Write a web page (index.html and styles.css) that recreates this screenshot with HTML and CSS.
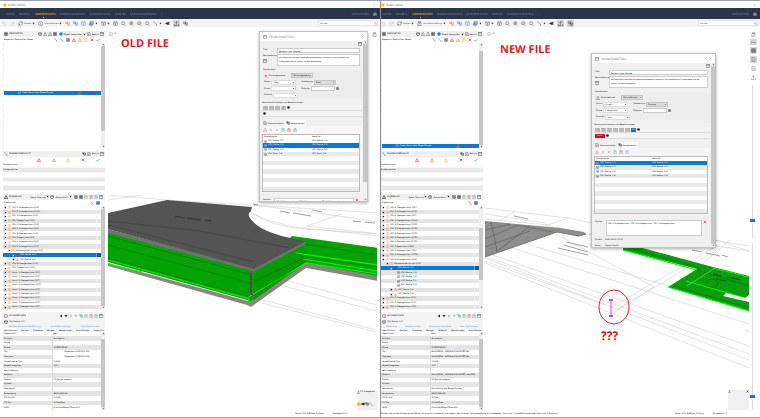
FILE: index.html
```html
<!DOCTYPE html>
<html lang="de">
<head>
<meta charset="utf-8">
<title>Solibri Office</title>
<link rel="stylesheet" href="styles.css">
</head>
<body>
<svg class="sprite" aria-hidden="true">
  <symbol id="undo" viewBox="0 0 16 16"><path d="M5 2 2 6l4 3M2 6h7a4 4 0 0 1 0 8H5"/></symbol>
  <symbol id="redo" viewBox="0 0 16 16"><path d="m11 2 3 4-4 3M14 6H7a4 4 0 0 0 0 8h4"/></symbol>
  <symbol id="spin" viewBox="0 0 16 16"><path d="M2 9a6 6 0 0 1 11-4M14 7a6 6 0 0 1-11 4M10 5h4V1M6 11H2v4"/></symbol>
  <symbol id="info" viewBox="0 0 16 16"><circle cx="8" cy="8" r="7"/><path d="M8 7v5M8 4v1"/></symbol>
  <symbol id="boxes" viewBox="0 0 16 16"><path d="M1 2h7v6H1zM6 6l5-2 4 2v6l-4 3-5-3zM6 6l5 3 4-3M11 9v6"/></symbol>
  <symbol id="cube" viewBox="0 0 16 16"><path d="m8 1 6 3v8l-6 3-6-3V4zM2 4l6 3 6-3M8 7v8"/></symbol>
  <symbol id="layers" viewBox="0 0 16 16"><path d="M2 6h8v8H2zM5 6V2h9v8h-4M2 10h8M6 6v8"/></symbol>
  <symbol id="zoom" viewBox="0 0 16 16"><circle cx="7" cy="7" r="5"/><path d="m11 11 4 4"/></symbol>
  <symbol id="zin" viewBox="0 0 16 16"><circle cx="7" cy="7" r="5"/><path d="m11 11 4 4M4 7h6M7 4v6"/></symbol>
  <symbol id="zout" viewBox="0 0 16 16"><circle cx="7" cy="7" r="5"/><path d="m11 11 4 4M4 7h6"/></symbol>
  <symbol id="rule" viewBox="0 0 16 16"><path d="m2 3 11 10M1 5l3-3M11 15l3-3"/></symbol>
  <symbol id="plane" viewBox="0 0 16 16"><path d="m1 8 6-3 8-1-3 4 2 3H7z" fill="currentColor"/></symbol>
  <symbol id="up" viewBox="0 0 16 16"><path d="M8 12V2M4 6l4-4 4 4M1 10v5h14v-5"/></symbol>
  <symbol id="check" viewBox="0 0 16 16"><path d="m2 8 4 5 8-10" stroke-width="2.500"/></symbol>
  <symbol id="cross" viewBox="0 0 16 16"><path d="m3 3 10 10M13 3 3 13" stroke-width="2.500"/></symbol>
  <symbol id="tri" viewBox="0 0 16 16"><path d="M8 2 15 14H1zM8 6v4" stroke-width="2"/></symbol>
  <symbol id="grid" viewBox="0 0 16 16"><path d="M2 2h12v12H2zM2 6h12M2 10h12M6 2v12M10 2v12"/></symbol>
  <symbol id="win" viewBox="0 0 16 16"><path d="M1 2h14v12H1zM1 5h14"/></symbol>
  <symbol id="doc" viewBox="0 0 16 16"><path d="M3 5h10v10H3zM5 5V1h6v4M6 9h4"/></symbol>
  <symbol id="user" viewBox="0 0 16 16"><path d="M1 5h14v9H1zM5 5V2h6v3" fill="currentColor"/></symbol>
  <symbol id="page" viewBox="0 0 16 16"><path d="M3 1h7l3 4v10H3zM5 12l5-6"/></symbol>
  <symbol id="dot" viewBox="0 0 16 16"><circle cx="8" cy="8" r="7" fill="currentColor" stroke="none"/></symbol>
  <symbol id="down" viewBox="0 0 16 16"><path d="M2 4h12L8 13z" fill="currentColor" stroke="none"/></symbol>
  <symbol id="next" viewBox="0 0 16 16"><path d="m4 2 9 6-9 6z" fill="currentColor" stroke="none"/></symbol>
  <symbol id="prev" viewBox="0 0 16 16"><path d="M12 2 3 8l9 6z" fill="currentColor" stroke="none"/></symbol>
  <symbol id="upt" viewBox="0 0 16 16"><path d="M2 12h12L8 3z" fill="currentColor" stroke="none"/></symbol>
</svg>

<main class="desk" id="desk"></main>

<template id="scene-old">
  <svg class="scene" viewBox="106 28 274 384" preserveAspectRatio="xMinYMin slice" role="img" aria-label="Modell alt">
    <g class="wire">
      <path d="M108 195 167 200 252 205 380 213M108 200l35-5M254 205l70 9 56 8M250 211q20 16 55 18l75 5M307 226l35-12M307 226l73 8M253 214q30 14 70 16l57 6"/>
      <path d="M256 272 380 306M254 278 380 312M252 297 380 331M262 303 380 333"/>
      <path class="ink" d="m280 211 10 2m3 0 18 3M353 221l8 1m4 0 10 1M312 210l10 2M253 204l5 1"/>
    </g>
    <path fill="#87877e" d="M108 263 248 301 306 263 378 275V281L306 268 251 307 247 305 108 266z"/>
    <path fill="#00a300" d="M108 231 254 271 292 236 378 248V276L306 263 251 301 108 262z"/>
    <path fill="#009c00" d="m254 271 52-27v18l-52 38z"/>
    <path class="glow" d="M108 260 247 298 306 263 378 274M248 303l1-5M108 264 142 272M303 259l75 12M296 253l82 12"/>
    <path class="slit" d="M108 245 250 283 304 258M108 258 250 297M108 236l141 38M253 296l53-35M290 242l88 13M300 256l78 11"/>
    <path fill="#707070" d="M108 229 254 268 306 241V244L254 271.500 108 233z"/>
    <path fill="#545454" d="M108 213 167 200 252 207 251 211Q247 214 250 218 260 234 306 241L254 269 108 229z"/>
    <path class="slit" d="M108 221 200 231 290 248M108 225 254 262"/>
    <path class="seam" d="m175 216 10 2m2 0 14 2m4 0 6 1"/>
    <path class="probe" d="M251 272v22"/><path fill="#9c2d9c" d="M249 271h4v2h-4zM249 293h4v2h-4z"/>
  </svg>
</template>

<template id="scene-new">
  <svg class="scene" viewBox="484 28 276 384" preserveAspectRatio="xMinYMin slice" role="img" aria-label="Modell neu">
    <g class="wire">
      <path d="M485 208 568 218 548 225 485 219M485 214l60 9M515 212l-15 8M568 218l40 8 44 10 97 15M545 225l56 12"/>
      <path d="M556 234 654 287M485 252l269 96M485 258 749 360M485 263 749 368M485 256 749 354M500 244l249 80M520 242l155 46M654 287l-36 22M610 308l110-64M614 312 720 248M485 261l120 44M713 240l36 6M700 266l30-26M716 240l33 11M745 330l10 4"/>
      <path class="ink" d="M566 242l22 5m-24-2 24 7m-30-4 30 7M692 250l10 2m4 1 14 3m2-1 6 2M514 216l14 3"/>
    </g>
    <path fill="#8d8d8d" d="M485 221 560 228 584 232 586 234 579 236 557 232 485 257z"/>
    <path fill="none" stroke="#77776c" d="m485 257 72-25 22 4 7-2"/>
    <path class="slit" d="m485 239 33-14 35 7M485 230l26-6M497 251l-6-29M530 226l-34 26M485 247l45-16"/>
    <path fill="#0a9e0a" d="M623 247 635 246 713 267 749 276V311L668 287 697 269 623 250z"/>
    <path class="glow" d="M623 250 697 270M668 287 749 311M686 281 749 299M713 268 749 277"/>
    <path class="slit" d="m697 270 52 16M630 248l70 20M674 286l75 22M706 284a6 4 0 1 1 5 3"/>
    <path fill="none" stroke="#a6dca6" stroke-width=".5" d="m687 286 28-18"/>
    <path class="seam" d="m713 274 8 2m6 1 14 3M716 279l10 2"/>
    <path fill="#fff" d="M726 293 745 298 749 295V302L723 296z"/>
    <ellipse cx="614" cy="307" rx="15" ry="17" fill="none" stroke="#e3202b"/>
    <path fill="none" stroke="#d04bd6" d="M611 300v16"/><path fill="#c53fce" d="M609 299h4v2h-4zM609 315h4v2h-4z"/>
  </svg>
</template>

<script src="app.js"></script>
</body>
</html>
```

FILE: styles.css
```css
* { box-sizing: border-box; }
html, body { height: 100%; }
body { margin: 0; background: #fff; color: #000; font: 2px/4px "DejaVu Sans", Verdana, sans-serif; text-rendering: geometricPrecision; overflow: hidden; }
button, input, select, textarea { font: inherit; color: inherit; margin: 0; padding: 0; border: 0; background: none; border-radius: 0; min-width: 0; appearance: none; }
a { color: inherit; text-decoration: none; }
ul { list-style: none; margin: 0; padding: 0; }
table { border-collapse: collapse; width: 100%; table-layout: fixed; }
th, td { padding: 0 1px; height: 4px; text-align: left; font-weight: 400; white-space: nowrap; overflow: hidden; }
fieldset { border: 0; margin: 0; padding: 0; min-width: 0; }
legend { padding: 0; }
h2, h3 { margin: 0; font: inherit; }
.sprite { position: absolute; width: 0; height: 0; }
.ic { width: 4px; height: 4px; flex: none; display: block; fill: none; stroke: currentColor; stroke-width: 1.3; }
.big .ic { width: 5px; height: 5px; }
.ic.tiny, .big .ic.tiny { width: 3px; height: 3px; }
.red { color: #e0202c; } .orange { color: #ee7a1c; } .yellow { color: #f0be14; }
.green { color: #14a866; } .blue { color: #1d84d8; } .grey { color: #b4b4b4; } .black { color: #222; }
.spacer { flex: 1; }

.desk { display: grid; grid-template-columns: 1fr 1fr; height: 100%; }
.app { --inset: 3px; position: relative; display: grid; grid-template-rows: 8px 11px 9px 1fr 6px; min-width: 0; overflow: hidden; border-bottom: 1px solid #aaa; }
.app.second { --inset: 0px; border-left: 1px solid #8a8d94; }
.row { display: flex; align-items: center; white-space: nowrap; min-width: 0; }

.titlebar, .nav { font: 3px/4px "Liberation Sans", Arial, sans-serif; }
.titlebar { padding: 0 5px 0 var(--inset); gap: 1px; border-top: 1px solid #9aa3b5; color: #666; }
.titlebar .controls { display: flex; gap: 9px; color: #999; }
.nav { background: #2c3449; color: #7d8496; gap: 4px; padding: 0 3px 0 calc(var(--inset) + 3px); }
.second .nav { padding-left: 2px; }
.nav a.on { color: #f3bd15; position: relative; }
.nav a.on::after { content: ""; position: absolute; left: 8px; top: 5px; width: 1px; height: 1px; background: #f3bd15; }
.toolbar { background: #f4f4f4; padding: 0 2px 0 calc(var(--inset) - 1px); gap: 3px; border-bottom: 1px solid #fff; color: #333; }
.toolbar button { display: flex; align-items: center; gap: 1px; flex: none; }
.toolbar .pressed { background: #cfcfcf; padding: 1px; }
.search { display: flex; align-items: center; flex: 0 1 60px; background: #fff; border: 1px solid #e3e3e3; height: 6px; }
.search input { flex: 1; padding-left: 1px; }

.work { display: grid; grid-template-columns: calc(var(--inset) + 102px) 1fr; min-height: 0; }
.side { display: grid; grid-template-rows: 117fr 40fr 116fr 98fr; gap: 3px; padding: 3px 0 1px var(--inset); min-height: 0; }
.panel { display: grid; grid-template-rows: 6px 6px 1fr; min-height: 0; min-width: 0; overflow: hidden; }
.bar { background: #f0f0f0; padding: 0 1px; gap: 1px; }
.bar .icons { display: flex; gap: 1px; margin: 0 1px; }
.bar button { display: flex; align-items: center; gap: 1px; }
.cols { padding: 0 5px 0 1px; gap: 2px; }
.scrolled { display: grid; grid-template-columns: 1fr 4px; min-height: 0; }
.sb { background: #f0f0f0; display: grid; grid-template-rows: 3px 1fr 3px; justify-items: center; color: #777; min-height: 0; }
.sb .track { width: 100%; min-height: 0; display: grid; }
.thumb { background: #c6c6c6; }

.rules { display: grid; min-height: 0; border-left: 1px dashed #eee; }
.rules .picked { grid-row: 2; background: #0b78d7; color: #fff; padding-left: 14px; gap: 1px; }
.rules .picked .marks { display: flex; gap: 8px; margin-right: 7px; }
.old .rules { grid-template-rows: 48fr 4px 53fr; }
.new .rules { grid-template-rows: 1fr 4px; }

.overview { grid-template-rows: 6px 1fr; }
.overview table { height: 100%; }
.overview th { height: 6px; }
.overview th .ic { margin: auto; }
.overview th:first-child { width: 29px; }
.overview tbody td { padding: 0; }
.overview tbody tr { border-bottom: 1px solid #f6f6f6; }
.overview tbody tr:nth-child(even) { background: #e8e8e8; }

.results { grid-template-rows: 6px 6px 1fr; }
.tree { display: grid; grid-auto-rows: 1fr; min-height: 0; }
.tree li { display: flex; align-items: center; gap: 1px; padding-left: 1px; min-height: 0; white-space: nowrap; overflow: hidden; line-height: 4px; }
.tree li:nth-child(even) { background: #e4e4e4; }
.tree .lv1 { padding-left: 5px; } .tree .lv2 { padding-left: 9px; } .tree .lv3 { padding-left: 16px; }
.tree .edge { align-self: stretch; width: 5px; margin-left: auto; border-left: 1px solid #f2f2f2; flex: none; }
.tree li.sel { background: #0b78d7; color: #fff; }
.tree li.sel .edge { background: #125a9b; border-color: #4ba0e8; }

.details { grid-template-rows: 7px 5px 4px 4px 1fr; }
.details .bar, .details .tabs { background: #f4f4f4; }
.tabs { gap: 1px; padding: 0 1px; justify-content: space-between; overflow: hidden; }
.tabs.sets { justify-content: space-around; color: #3f7dba; }
.tabs button.on { background: #fff; }
.details table { height: 100%; }
.details th:first-child { width: 50%; }
.details td + td { border-left: 1px solid #ddd; }
.details tbody tr:nth-child(odd) { background: #e4e4e4; }
.details tbody tr.sub td + td { padding-left: 12px; background: #fff; }

.view { position: relative; min-width: 0; min-height: 0; margin-left: 1px; }
.scene { position: absolute; inset: 0; width: 100%; height: 100%; clip-path: inset(0 3px 0 2px); }
.new .scene { clip-path: inset(0 11px 0 1px); }
.wire { fill: none; stroke: #c4c4c4; stroke-width: .5; }
.wire .ink { stroke: #888; stroke-width: .8; }
.glow { fill: none; stroke: #00f500; stroke-width: 1.2; }
.slit { fill: none; stroke: #222; stroke-width: .4; opacity: .7; }
.seam { fill: none; stroke: #222; stroke-width: .7; }
.probe { fill: none; stroke: #553a58; stroke-width: 1.6; }
.tag { position: absolute; left: 3px; top: 4px; display: flex; gap: 1px; color: #666; }
.note { position: absolute; margin: 0; color: #ee1620; font: 700 11px/14px "Open Sans", "Noto Sans", sans-serif; white-space: nowrap; }
.old .note { left: 15px; top: 9px; }
.new .note { left: 16px; top: 15px; }
.new .note.what { left: 117px; top: 301px; color: #d9121c; font-size: 12px; }
.rail { position: absolute; right: 3px; top: 4px; display: grid; gap: 2px; justify-items: center; color: #555; }
.rail .held { background: #d8d8d8; }
.rail button { padding: 1px 0; min-width: 7px; display: grid; justify-items: center; }
.depth { position: absolute; right: 5px; top: 57px; bottom: 2px; width: 5px; display: grid; grid-template-rows: 155fr 167fr; gap: 4px; }
.depth input { writing-mode: vertical-lr; width: 5px; height: 100%; background: linear-gradient(90deg, #0000 2px, #dcdcdc 2px, #dcdcdc 3px, #0000 3px); }
.depth input::-webkit-slider-thumb { appearance: none; width: 5px; height: 3px; background: #1478cf; }
.mini { position: absolute; right: 2px; bottom: 1px; width: 21px; height: 20px; background: #f0f0f0; display: flex; flex-wrap: wrap; align-content: space-between; justify-content: space-between; overflow: hidden; }
.new .mini { right: 11px; }
.mini .pic { display: flex; width: 100%; align-items: center; height: 12px; }

.status { padding: 0 33px 0 0; gap: 9px; }

.dialog { position: absolute; left: 259px; top: 31px; width: 109px; height: 171px; background: #f0f0f0; border: 1px solid #c2c2c2; box-shadow: 0 1px 3px #0005; overflow: hidden; display: grid; grid-template-rows: 9px 1fr; }
.new .dialog { left: 210px; top: 53px; width: 125px; height: 195px; }
.dialog .cap { background: #fff; padding: 0 3px; gap: 2px; color: #888; font: 3px/4px Lato, "Liberation Sans", sans-serif; }
.dialog .content { display: grid; grid-template-columns: 1fr 4px; min-height: 0; }
.form { padding: 0 1px 0 2px; min-width: 0; min-height: 0; }
.form .tool { height: 5px; justify-content: flex-end; margin-bottom: 2px; }
.line { display: grid; grid-template-columns: 14px 1fr; margin: 0 2px 2px 1px; }
.line input, .line textarea { background: #fff; border: 1px solid #ccc; padding: 0 1px; height: 5px; line-height: 3px; width: 100%; display: block; resize: none; overflow: hidden; }
.line textarea { height: 12px; line-height: 4px; font-family: "Liberation Sans", Arial, sans-serif; }
.line .ic { margin-top: 1px; }
.line.first { margin-bottom: 1px; }
.coord { background: #ededed; margin-bottom: 3px; }
.coord legend { line-height: 5px; padding-left: 1px; }
.fields { height: 25px; display: flex; flex-direction: column; justify-content: space-between; padding-left: 2px; }
.fields .row { height: 5px; gap: 1px; }
.pick { position: relative; display: block; background: #fff; border: 1px solid #ddd; width: 25px; height: 5px; }
.pick select { width: 100%; height: 3px; line-height: 3px; display: block; padding-left: 1px; }
.pick::after { content: ""; position: absolute; right: 1px; top: 1px; width: 1px; height: 1px; background: #888; }
.pick.dark { background: #dcdcdc; border-color: #c6c6c6; width: 22px; }
.fields .gap { margin-left: 4px; }
.fields input { width: 24px; height: 5px; background: #fff; border: 1px solid #ccc; }
.people { margin-bottom: 3px; }
.people .chips { height: 6px; gap: 1px; padding-left: 1px; border-bottom: 1px solid #ddd; background: #f3f3f3; }
.chip { background: #bdbdbd; color: #999; min-width: 5px; height: 4px; line-height: 4px; text-align: center; }
.chip.blueb { background: #2765b8; color: #fff; }
.chip.redb { background: #cf0a24; color: #fff; width: 10px; }
.dtabs { height: 6px; gap: 1px; padding-left: 1px; }
.dtabs button { display: flex; align-items: center; gap: 1px; }
.dtabs button.on { background: #fafafa; height: 6px; padding: 0 1px; }
.comps { background: #f6f6f6; padding: 1px 2px 1px 0; margin-bottom: 5px; }
.comps .ops { height: 5px; gap: 2px; padding-left: 1px; margin-bottom: 2px; }
.comps table { background: #fff; border: 1px solid #bbb; height: 58px; }
.comps tbody tr:nth-child(even) { background: #e9e9e9; }
.comps tr.sel, .comps tbody tr.sel:nth-child(n) { background: #0b78d7; color: #fff; }
.comps td .cell { display: flex; align-items: center; gap: 1px; }
.place { display: grid; grid-template-columns: 10px 1fr 5px; gap: 1px; margin: 0 2px 2px 1px; }
.place textarea { background: #fff; border: 1px solid #ccc; height: 16px; width: 100%; display: block; resize: none; overflow: hidden; line-height: 4px; padding: 0 1px; }
.meta { display: grid; grid-template-columns: 10px 1fr; row-gap: 2px; margin: 0 0 0 1px; }
```

FILE: app.js
```js
const ic = (name, cls = '') => `<svg class="ic ${cls}" aria-hidden="true"><use href="#${name}"/></svg>`;
const ics = list => list.split(' ').map(s => ic(...s.split(':'))).join('');
const sb = (from, to) => `<div class="sb">${ic('upt', 'tiny')}<div class="track" style="padding:${from}px 0 ${to}px"><div class="thumb"></div></div>${ic('down', 'tiny')}</div>`;

const apps = [
  {
    cls: 'old', title: 'Solibri Office -', mode: 'Informationen', note: 'OLD FILE', status: '',
    scroll: [0, 14], treeScroll: [0, 0],
    tree: ['(P1)-1.Untergeschoss [0/3]', '(P1)-2.Untergeschoss [0/11]', '(P1) 1.Obergeschoss [0/1]', '(P1) Erdgeschoss [0/1]',
      '(P2)-1.Untergeschoss [0/2]', '(P2)-2.Untergeschoss [0/1]', '(P2) 4.Obergeschoss [0/1]', '(P2) Erdgeschoss [0/1]',
      '(P2)-1.Untergeschoss [0/1]', '(P2)-2.Untergeschoss [1/2]', '1|Komponenten zu nah [1/2]', '*2|(P2) Decke -2.1', '2|(P2) Decke -2.2',
      '(P3) 4.Obergeschoss [0/1]', '(P3) Erdgeschoss [0/1]', 'Umst. 1.Obergeschoss [0/7]', 'Umst. 2.Obergeschoss [0/7]', 'Umst. 3.Obergeschoss [0/7]',
      'Umst. 1.Untergeschoss [0/7]', 'Umst. 4.Obergeschoss [0/7]', 'Umst. 5.Obergeschoss [0/7]', 'Umst. 6.Obergeschoss [0/7]',
      'Umst. 7.Obergeschoss [0/7]', 'Umst. 7.Obergeschoss [0/7]'],
    sets: ['AC_Pset_RenovationAndPhasing', 'ArchiCADQuantities', 'Pset_SlabCommon'],
    tabs: ['Identifikation', 'Position', 'Probleme', 'Mengen', 'Beziehungen', 'Klassifikation', 'Hyperlinks'],
    typ: 'Allgemein (U.55)200.300', sub: true, geo: '', mat: '', tick: 'cross:red', state: 'Zurückgewiesen',
    status1: 'Offen', kind: 'Büro', phase: '', prio: '', chips: 4, extra: '', sel: 1,
    comps: ['(P2) Decke -2.0', '(P2) Decke -2.1', '(P2) Decke -2.2', '(P2) Dach -1.3'], after: ''
  },
  {
    cls: 'new second', title: 'Solibri Office', mode: 'Schnittdarstellung', note: 'NEW FILE',
    status: 'Klicken Sie auf die Komponentenfläche, um eine Schnittebene zu erstellen. Verschieben Sie ausgewählte Schnittebenen: Umschalt + linke Maustaste oder Umschalt + Mausrad.',
    scroll: [5, 0], treeScroll: [19, 26],
    tree: ['(P1)-2.Obergeschoss [0/2]', '(P1)-1.Untergeschoss [0/1]', '(P1)-2.Obergeschoss [0/7]', '(P2) 1.Obergeschoss [0/30]',
      '(P2) 2.Obergeschoss [0/76]', '(P2) 3.Obergeschoss [0/79]', '(P2) 4.Obergeschoss [0/76]', '(P2) 5.Obergeschoss [0/76]',
      '(P2) 6.Obergeschoss [0/76]', '(P2) Erdgeschoss [0/80]', '(P2)-1.Obergeschoss [0/2]', '(P2)-1.Untergeschoss [0/79]',
      '(P2)-2.Untergeschoss [0/3]', '1|Komponenten zu nah [0/3]', '*2|(P2) Decke -2.1', '3|(P2) Decke -1.5', '3|(P2) Decke -1.8',
      '3|(P2) Decke -2.1', '3|(P2) Decke -2.4', '2|(P2) Decke -2.2', '2|(P2) Decke -2.4', '(P3) 4.Obergeschoss [0/1]',
      '(P3) 5.Obergeschoss [0/1]', '(P3) 6.Obergeschoss [0/1]'],
    sets: ['Constraints', 'BaseQuantities', 'Component Quantities', 'Pset_SlabCommon'],
    tabs: ['Identifikation', 'Position', 'Probleme', 'Mengen', 'Material', 'Beziehungen', 'Klassifikation'],
    typ: 'ALLGEMEIN - NIEDRIGE PRIORITÄT AB', sub: false, geo: 'Darstellung der Begrenzungen', mat: 'ALLGEMEIN - NIEDRIGE PRIORITÄT, ALLGEM.',
    tick: 'up', state: 'Nicht definiert', status1: 'Erstellt', kind: 'Planung', phase: '2 Vorentwurf', prio: 'Hoch', chips: 6,
    extra: '<span class="chip blueb">BH</span>', sel: 0,
    comps: ['(P2) Decke -2.1', '(P2) Decke -1.5', '(P2) Decke -2.4', '(P2) Decke -1.8'],
    after: '<div class="meta"><span>Erstellt</span><span>2020-08-21 17:17</span><span>Autor</span><span>Signet Sandhi</span></div>'
  }
];

const treeRow = text => {
  const sel = text.startsWith('*');
  const parts = text.replace('*', '').split('|');
  const level = parts.length > 1 ? parts[0] : 0;
  const label = parts[parts.length - 1];
  const mark = level == 3 ? ic('cube', 'tiny') : ic('next', 'tiny') + ic(level > 1 ? 'tri' : 'doc', sel ? 'tiny red' : 'tiny orange');
  return `<li class="lv${level}${sel ? ' sel' : ''}">${mark}${label}<span class="edge"></span></li>`;
};

const pick = (id, label, value, cls = '') =>
  `<span class="pick ${cls}"><select id="${id}" aria-label="${label}"><option>${value}</option></select></span>`;

const render = (a, n) => {
  const props = [['Disziplin', 'Architektur'], ['Name', ''], ['Phase', 'VORENTWURF'], ['Typ', a.typ, a.sub], ['Typname', a.typ, a.sub],
    ['Vordefinierter Typ', 'FLOOR'], ['Modellkategorien', 'HHO'], ['Beschreibung', ''], ['Material', a.mat], ['Ebene', '11 Decke tragend'],
    ['System', ''], ['Geometrie', a.geo], ['Anwendung', 'ARCHICAD-64'], ['IFC Entität', 'IfcSlab'], ['IFC Typ', 'IfcSlabType'], ['GUID', '0HwQudrM8bgHFRwcpCIV']];
  const rows = a.comps.concat(Array(8).fill(''));
  const icon = a.cls === 'old' ? 'info' : 'doc';
  return `<section class="app ${a.cls}" aria-label="${a.note}">
  <header class="titlebar row">${ic('dot', 'yellow')}<span>${a.title}</span><span class="spacer"></span><span class="controls"><span>–</span><span>□</span><span>×</span></span></header>
  <nav class="nav row"><a href="#">DATEI</a><a href="#">MODELL</a><a href="#" class="on">ÜBERPRÜFEN</a><a href="#">KOMMUNIKATION</a><a href="#">AUSWERTUNG</a><a href="#">NUR 3D</a><a href="#">KLASSIFIZIERUNG</a><a href="#">+</a><span class="spacer"></span><a href="#">ANSICHTEN</a>${ic('user')}</nav>
  <div class="toolbar row big">
    <button aria-label="Zurück">${ic('undo', 'grey')}</button><button aria-label="Vor">${ic('redo', 'grey')}</button>
    <button>${ic('spin')}Drehen ${ic('down', 'tiny')}</button><button>${ic(icon)}${a.mode} ${ic('down', 'tiny')}</button>
    <button aria-label="Auswahl">${ic('boxes', 'orange')}</button><button aria-label="Ebenen">${ic('boxes', 'blue')}</button><button aria-label="Würfel">${ic('cube', 'blue')}</button>
    <button aria-label="Ansicht">${ic('layers', 'black')}${ic('down', 'tiny')}</button><button aria-label="Kamera">${ic('cube')}${ic('down', 'tiny')}</button><button aria-label="3D">${ic('cube')}</button>
    <button aria-label="Zoom">${ic('zoom')}</button><button aria-label="Vergrößern">${ic('zin')}</button><button aria-label="Verkleinern">${ic('zout')}</button><button aria-label="Einpassen">${ic('zoom')}</button>
    <button aria-label="Messen">${ic('rule')}${ic('down', 'tiny')}</button><button aria-label="Flug">${ic('plane')}</button>
    <button class="pressed" aria-label="Export">${ic('up', 'black')}</button><button class="${n ? 'pressed' : ''}" aria-label="Modell">${ic('boxes')}</button>
    <span class="spacer"></span><label class="search"><input aria-label="Suchen" value="Suchen">${ic('zoom', 'tiny')}</label>
  </div>
  <div class="work">
    <div class="side">
      <section class="panel">
        <div class="bar row">${ic('grid')}<h2>ÜBERPRÜFEN</h2><span class="spacer"></span><span class="icons">${ics('cube up up grid')}</span><button>${ic('dot', 'blue')}Modell überprüfen ${ic('down', 'tiny')}</button><button>${ic('page')}Bericht</button>${ic('win')}</div>
        <div class="cols row"><span>Regelsatz-Überprüfter Modell</span><span class="spacer"></span>${ics('rule rule grid:black tri:red tri:orange tri:yellow cross:red check:green')}</div>
        <div class="scrolled"><div class="rules"><div class="picked row">${ic('page', 'tiny')}Freier Raum über Bodenflächen<span class="spacer"></span><span class="marks">${ics('tri:orange cross:red')}</span></div></div>${sb(...a.scroll)}</div>
      </section>
      <section class="panel overview">
        <div class="bar row">${ic('rule')}<h2>ERGEBNISÜBERSICHT</h2><span class="spacer"></span>${ics('boxes page')}<span>Bericht</span>${ic('win')}</div>
        <table><thead><tr><th></th>${['tri:red', 'tri:orange', 'tri:yellow', 'cross:red', 'check:green'].map(i => `<th>${ics(i)}</th>`).join('')}</tr></thead>
        <tbody>${['Problemanzahl', 'Problemdichte', '', '', '', ''].map(t => `<tr><td>${t}</td><td colspan="5"></td></tr>`).join('')}</tbody></table>
      </section>
      <section class="panel results">
        <div class="bar row">${ic('tri')}<h2>ERGEBNISSE</h2><span class="spacer"></span><button>Keine Filterung ${ic('down', 'tiny')}</button><button>${ic('cube')}Automatisch ${ic('down', 'tiny')}</button><span class="icons">${ics('grid:black grid doc:green doc:red doc:blue win')}</span></div>
        <div class="cols row"><span>Ergebnisse</span><span class="spacer"></span>${ics('rule grid')}</div>
        <div class="scrolled"><ul class="tree">${a.tree.map(treeRow).join('')}</ul>${sb(...a.treeScroll)}</div>
      </section>
      <section class="panel details">
        <div class="bar row">${ic('info')}<h2>INFORMATIONEN</h2><span class="spacer"></span><span class="icons">${ics('prev:black down:black next:grey down:grey boxes:green doc:green doc:red doc:blue win')}</span></div>
        <div class="bar row">${ic('cube')}<span>(P2) Decke -2.1</span></div>
        <div class="tabs sets row">${a.sets.map(t => `<button>${t}</button>`).join('')}</div>
        <div class="tabs row">${a.tabs.map((t, i) => `<button class="${i ? '' : 'on'}">${t}</button>`).join('')}</div>
        <div class="scrolled"><table><thead><tr><th>Eigenschaft</th><th>Wert</th></tr></thead><tbody>${props.map(p => `<tr class="${p[2] ? 'sub' : ''}"><td>${p[0]}</td><td>${p[1]}</td></tr>`).join('')}</tbody></table>${sb(4, 0)}</div>
      </section>
    </div>
    <div class="view">
      ${document.getElementById(n ? 'scene-new' : 'scene-old').innerHTML}
      <span class="tag">${ic('info')}3D</span>
      <p class="note">${a.note}</p>
      ${n ? '<p class="note what">???</p><div class="depth"><input type="range" aria-label="Schnitt oben" value="89"><input type="range" aria-label="Schnitt unten" value="93"></div>' : ''}
      <div class="rail big">${ic('doc')}${n ? `<button class="held" aria-label="Alles">Alles</button><button class="held" aria-label="Raster">${ic('grid', 'black')}</button><button class="held" aria-label="Schnitt">${ic('page')}</button><button aria-label="Blatt">${ic('page')}</button><button aria-label="Teilen">${ic('up')}</button>` : ''}</div>
      <div class="mini">${n ? ic('up', 'tiny') + ic('cross', 'tiny') : `<span class="row">${ic('up', 'tiny')}IFC-Kategorien</span><span class="pic">${ic('user', 'yellow')}${ics('plane boxes rule')}</span>`}</div>
    </div>
  </div>
  <footer class="status row"><span>${a.status}</span><span class="spacer"></span><span>Rolle: HHO_BIMfake_Prüfung</span><span>Ausgewählt: 0</span></footer>
  <div class="dialog" role="dialog" aria-label="Problemdetails">
    <div class="cap row">${ic('win', 'black')}<h3>PROBLEMDETAILS</h3><span class="spacer"></span>${ic('cross', 'tiny')}</div>
    <div class="content"><form class="form">
      <div class="tool row">${ic('win')}</div>
      <div class="line first"><label for="t${n}">Titel</label><input id="t${n}" value="Bereich unter Rampe"></div>
      <div class="line"><label for="b${n}">Beschreibung${ic('win')}</label><textarea id="b${n}">Im Lagerraum unterhalb der Erschließungsrampe kommt zu eine Reduktion der Lichtenhöhe bis auf 150cm. Ist das gewünscht?</textarea></div>
      <fieldset class="coord"><legend>Koordination</legend><div class="fields">
        <div class="row">${ics(a.tick)}<label for="z${n}">${a.state}</label><span class="gap"></span>${pick('z' + n, a.state, a.state, 'dark')}</div>
        <div class="row"><label for="s${n}">Status</label>${pick('s' + n, 'Status', a.status1)}<label class="gap" for="k${n}">Problemtyp</label>${pick('k' + n, 'Problemtyp', a.kind, 'dark')}</div>
        <div class="row"><label for="p${n}">Phase</label>${pick('p' + n, 'Phase', a.phase)}<label class="gap" for="d${n}">Fällig bis</label><input id="d${n}">${ic('grid', 'tiny')}</div>
        <div class="row"><label for="r${n}">Priorität</label>${pick('r' + n, 'Priorität', a.prio)}</div>
      </div></fieldset>
      <div class="people"><div>Verantwortlichkeiten und Bezeichnungen</div>
        <div class="chips row">${Array(a.chips).fill('<span class="chip">TW</span>').join('')}${a.extra}${ic('dot', 'tiny black')}</div>
        <div class="chips row">${n ? '<span class="chip redb">Archi.</span>' : ''}${ic('dot', 'tiny black')}</div></div>
      <div class="dtabs row"><button type="button">${ic('page')}Kommunikation</button><button type="button" class="on">${ic('boxes')}Komponenten</button></div>
      <div class="comps"><div class="ops row">${ics('up:red cross:grey cross:grey doc:green doc:red doc:blue')}</div>
        <table><thead><tr><th>Komponente</th><th>Identität</th></tr></thead><tbody>${rows.map((r, i) => `<tr class="${i === a.sel ? 'sel' : ''}"><td>${r ? `<span class="cell">${ic('cube', 'tiny')}${r}</span>` : '&nbsp;'}</td><td>${r}</td></tr>`).join('')}</tbody></table></div>
      <div class="place"><label for="o${n}">Position</label><textarea id="o${n}">(P1)-1.Untergeschoss, (P2)-2.Untergeschoss, (P2)-1.Untergeschoss</textarea>${ic('cross', 'red')}</div>
      ${a.after}
    </form>${sb(0, n ? 0 : 16)}</div>
  </div>
</section>`;
};

document.getElementById('desk').innerHTML = apps.map(render).join('');
```
